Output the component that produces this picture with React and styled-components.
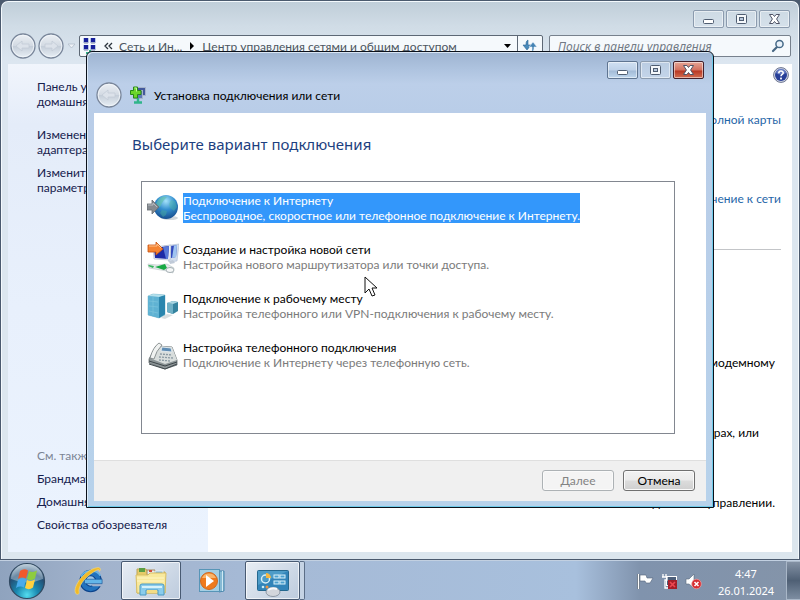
import React from 'react';
import styled, { createGlobalStyle } from 'styled-components';

const GlobalStyle = createGlobalStyle`
	* {
		box-sizing: border-box;
	}
	body {
		margin: 0;
		font-family: Lato, 'Noto Sans', sans-serif;
		font-size: 12px;
		line-height: 15px;
		color: #000;
		overflow: hidden;
	}
	button,
	input {
		font: inherit;
		color: inherit;
		padding: 0;
		margin: 0;
	}
	p, h1, h2, ul {
		margin: 0;
		padding: 0;
	}
	svg {
		display: block;
		flex-shrink: 0;
	}
`;

const Desktop = styled.div`
	position: relative;
	height: 100vh;
	display: flex;
	flex-direction: column;
	background: #4b5a6e;
`;

/* ---------- control panel window ---------- */

const MainWindow = styled.main`
	flex: 1;
	min-height: 0;
	display: flex;
	flex-direction: column;
	margin: 1px;
	padding: 0 6px 7px;
	border: 1px solid #f4f9fd;
	border-bottom: 0;
	border-radius: 7px 7px 0 0;
	background: linear-gradient(#c0ced9 0, #d0dce6 24px, #dce6f0 60px, #dce6ee 100%);
`;

const TitleButtons = styled.div`
	display: flex;
	justify-content: flex-end;
	gap: 2px;
	padding-top: ${(p) => p.$top}px;
	padding-right: 2px;
`;

const TitleButton = styled.button`
	width: 31px;
	height: 18px;
	display: flex;
	align-items: center;
	justify-content: center;
	border: 1px solid ${(p) => (p.$kind === 'close' ? '#43202b' : p.$kind === 'active' ? '#5f7591' : '#8b9bae')};
	border-radius: 2px;
	box-shadow: inset 0 0 0 1px rgba(255, 255, 255, 0.5);
	background: ${(p) =>
		p.$kind === 'close'
			? 'linear-gradient(#e5a596 0, #d3705e 8px, #b93824 9px, #d26e53 100%)'
			: p.$kind === 'active'
			? 'linear-gradient(#d0e0f2 0, #bfd2e9 8px, #a3bbd7 9px, #bfd7ee 100%)'
			: 'rgba(222, 232, 242, 0.35)'};
`;

const NavBar = styled.nav`
	display: flex;
	align-items: center;
	gap: 6px;
	height: 36px;
	padding: 0 1px 0 2px;
`;

const BackForward = styled.div`
	display: flex;
	align-items: center;
	gap: 2px;
	width: 63px;
`;

const AddressBar = styled.div`
	flex: 1;
	height: 22px;
	display: flex;
	align-items: center;
	border: 1px solid #5d6875;
	border-radius: 2px;
	background: #f5f9fc;
	color: #4c5661;
	overflow: hidden;
`;

const Crumbs = styled.div`
	flex: 1;
	display: flex;
	align-items: center;
	gap: 6px;
	padding: 0 6px 0 2px;
	white-space: nowrap;
`;

const Crumb = styled.button`
	border: 0;
	background: none;
`;

const Spacer = styled.span`
	flex: 1;
`;

const RefreshButton = styled.button`
	width: 25px;
	height: 20px;
	display: grid;
	place-items: center;
	border: 0;
	border-left: 1px solid #5d6875;
	background: none;
`;

const SearchBox = styled.label`
	width: 242px;
	height: 22px;
	display: flex;
	align-items: center;
	padding: 0 5px 0 8px;
	border: 1px solid #77818d;
	border-radius: 2px;
	background: #f5f9fc;
`;

const SearchInput = styled.input`
	flex: 1;
	min-width: 0;
	border: 0;
	outline: 0;
	background: none;
	font-family: 'Noto Sans', sans-serif;
	font-style: italic;
	&::placeholder {
		color: #727b86;
		opacity: 1;
	}
`;

const Client = styled.div`
	flex: 1;
	min-height: 0;
	display: flex;
	background: #fff;
`;

const Sidebar = styled.aside`
	width: 200px;
	flex-shrink: 0;
	display: flex;
	flex-direction: column;
	gap: 8px;
	padding: 15px 0 20px 29px;
	background: linear-gradient(#f1f5fc 0, #e4ecf9 60px, #e8f0fc 50%, #ebf3fe 100%);
	color: #15204d;
`;

const SideLink = styled.a`
	white-space: pre;
	color: inherit;
	text-decoration: none;
	margin-bottom: ${(p) => (p.$home ? 10 : 0)}px;
`;

const SeeAlso = styled.h2`
	margin-top: auto;
	font-size: 12px;
	font-weight: 400;
	color: #7b8494;
`;

const Content = styled.section`
	flex: 1;
	min-width: 0;
	display: flex;
	flex-direction: column;
	align-items: flex-end;
	padding: 3px 11px 0 0;
	white-space: nowrap;
`;

const HelpButton = styled.button`
	width: 16px;
	height: 16px;
	margin-right: -8px;
	border: 0;
	background: none;
`;

const ContentLink = styled.a`
	margin-top: ${(p) => p.$gap}px;
	color: #1f66a8;
	text-decoration: none;
`;

const Rule = styled.hr`
	width: 100%;
	margin: 43px 0 50px;
	border: 0;
	border-top: 1px solid #c3c5c8;
`;

const TaskText = styled.p`
	margin-top: 55px;
	padding-right: ${(p) => (p.$short ? 22 : 6)}px;
`;

/* ---------- wizard ---------- */

const Dialog = styled.section`
	position: absolute;
	z-index: 1;
	top: 51px;
	left: 86px;
	right: 86px;
	padding: 0 7px 6px;
	border: 1px solid #0b111b;
	border-radius: 6px 6px 0 0;
	box-shadow: inset 1px 1px 0 rgba(235, 245, 253, 0.75), inset -1px -1px 0 #6ecbea;
	background: linear-gradient(#9eb4d1 0, #afc4e0 18px, #bccfe9 32px, #b9cde8 60px, #b7d2eb 100%);
`;

const DialogTitle = styled.header`
	display: flex;
	align-items: center;
	gap: 8px;
	height: 34px;
	padding: 0 0 2px 2px;
`;

const RoundButton = styled.button`
	border: 0;
	background: none;
`;

const DialogName = styled.h1`
	font-size: 12px;
	font-weight: 400;
	line-height: 15px;
`;

const DialogBody = styled.div`
	background: #fff;
	padding: 20px 31px 26px 47px;
`;

const Heading = styled.h2`
	margin-left: -9px;
	margin-bottom: 26px;
	font-family: 'Noto Sans', sans-serif;
	font-size: 15px;
	line-height: 22px;
	font-weight: 400;
	color: #1d3f80;
`;

const Options = styled.ul`
	min-height: 253px;
	padding: 11px 0 0 5px;
	border: 1px solid #828790;
	list-style: none;
`;

const Option = styled.li`
	display: flex;
	gap: 4px;
	margin-bottom: 17px;
	height: 32px;
`;

const OptionButton = styled.button`
	align-self: flex-start;
	border: 0;
	text-align: left;
	white-space: nowrap;
	background: ${(p) => (p.$selected ? '#3397fb' : 'transparent')};
	color: ${(p) => (p.$selected ? '#fff' : '#000')};
`;

const Hint = styled.span`
	display: block;
	color: ${(p) => (p.$selected ? '#fff' : '#7b7b7b')};
`;

const DialogFooter = styled.footer`
	display: flex;
	justify-content: flex-end;
	gap: 9px;
	padding: 9px 11px 10px;
	border-top: 1px solid #dfdfdf;
	background: #f0f0f0;
`;

const PushButton = styled.button`
	width: 72px;
	height: 21px;
	border: 1px solid #707070;
	border-radius: 3px;
	box-shadow: inset 0 0 0 1px #fafafa;
	background: linear-gradient(#f2f2f2 0, #ebebeb 9px, #dcdcdc 10px, #cfcfcf 100%);
	&:disabled {
		border-color: #adb2b5;
		background: #f4f4f4;
		color: #838383;
	}
`;

/* ---------- taskbar ---------- */

const Taskbar = styled.footer`
	height: 40px;
	flex-shrink: 0;
	display: flex;
	align-items: center;
	border-top: 1px solid #c2d0e1;
	background: linear-gradient(90deg, #8fa3be 0, #a2b3cc 12%, #a5b9d5 30%, #a8c0dd 72%, #8093ad 80%, #8494a9 100%);
`;

const TaskButton = styled.button`
	width: ${(p) => p.$width}px;
	height: 39px;
	display: grid;
	place-items: center;
	border: ${(p) => (p.$open ? '1px solid #485a72' : '0')};
	border-radius: 2px;
	box-shadow: ${(p) => (p.$open ? 'inset 0 0 0 1px rgba(255, 255, 255, 0.65)' : 'none')};
	background: ${(p) => (p.$open ? 'linear-gradient(135deg, #e7edf4, #bdcbdd)' : 'none')};
`;

const StackEdge = styled.span`
	width: 5px;
	height: 39px;
	border: 1px solid #5c6e87;
	border-left: 0;
	border-radius: 0 2px 2px 0;
	background: #c5d3e4;
`;

const Gap = styled.span`
	width: 3px;
`;

const Tray = styled.div`
	display: flex;
	align-items: center;
	gap: 7px;
	margin-left: auto;
	padding-top: 2px;
`;

const Clock = styled.time`
	width: 74px;
	margin-right: 3px;
	text-align: center;
	font-family: 'Noto Sans', sans-serif;
	font-size: 11px;
	line-height: 17px;
	color: #fff;
`;

const ShowDesktop = styled.button`
	width: 14px;
	height: 39px;
	border: 1px solid #a9b7c8;
	border-right: 0;
	background: linear-gradient(#8391a4, #4f6075 50%, #7d8da1);
`;

const Cursor = styled.svg`
	position: absolute;
	z-index: 2;
	left: 364px;
	top: 276px;
`;

/* ---------- drawings ---------- */

const MinGlyph = () => (
	<svg width="13" height="12" viewBox="0 0 13 12">
		<rect x="1.5" y="6.5" width="10" height="4" rx="1" fill="#fff" stroke="#4f5d71" />
	</svg>
);

const MaxGlyph = () => (
	<svg width="13" height="12" viewBox="0 0 13 12">
		<rect x="1.5" y="1.5" width="10" height="9" rx="1" fill="#f5f8fb" stroke="#4f5d71" />
		<rect x="4.5" y="4.5" width="4" height="3" fill="#b8c8dc" stroke="#4f5d71" />
	</svg>
);

const CloseGlyph = () => (
	<svg width="13" height="12" viewBox="0 0 13 12">
		<path
			d="M1.5 1.5h3.4l1.6 2 1.6-2h3.4L8.6 6l2.9 4.5H8.1l-1.6-2-1.6 2H1.5L4.4 6z"
			fill="#fff"
			stroke="#4f5366"
		/>
	</svg>
);

const WindowButtons = ({ active, top }) => (
	<TitleButtons $top={top}>
		<TitleButton $kind={active ? 'active' : 'plain'} aria-label="Свернуть"><MinGlyph /></TitleButton>
		<TitleButton aria-label="Развернуть"><MaxGlyph /></TitleButton>
		<TitleButton $kind={active ? 'close' : 'plain'} aria-label="Закрыть"><CloseGlyph /></TitleButton>
	</TitleButtons>
);

const RoundArrow = ({ id, flip }) => (
	<svg width="26" height="26" viewBox="0 0 26 26">
		<defs>
			<linearGradient id={id} x1="0" y1="0" x2="0" y2="1">
				<stop offset="0" stopColor="#edf1f5" />
				<stop offset=".48" stopColor="#d3dae3" />
				<stop offset=".52" stopColor="#c5ced9" />
				<stop offset="1" stopColor="#e9f0f6" />
			</linearGradient>
		</defs>
		<circle cx="13" cy="13" r="12" fill={`url(#${id})`} stroke="#79869a" strokeWidth="1.3" />
		<circle cx="13" cy="13" r="10.8" fill="none" stroke="#f4f8fb" strokeOpacity=".8" />
		<path
			d="M6 13l6-5v3h7v4h-7v3z"
			transform={flip ? 'translate(26 0) scale(-1 1)' : undefined}
			fill="#dce2ea"
			stroke="#c3ccd7"
			strokeWidth=".8"
		/>
	</svg>
);

const NetworkCenterIcon = () => (
	<svg width="16" height="20" viewBox="0 0 16 20">
		<path d="M8 14v5M4 17h8" stroke="#36b18a" strokeWidth="2" />
		{[[2, 3], [9, 3], [2, 10], [9, 10]].map(([x, y]) => (
			<g key={`${x}-${y}`}>
				<rect x={x - 1} y={y - 1} width="6" height="5" fill="#b9c8e8" />
				<rect x={x} y={y - 1} width="4" height="4" fill="#17209b" />
				<path d={`M${x} ${y + 4}h4`} stroke="#7884a5" />
			</g>
		))}
	</svg>
);

const RefreshIcon = () => (
	<svg width="16" height="14" viewBox="0 0 16 14">
		<path d="M6 1C4 2 4 4 4 6H1l4 5 4-5H6c0-2 0-3 0-5z" fill="#4a8bbb" stroke="#2c6796" strokeWidth=".6" />
		<path d="M10 13c2-1 2-3 2-5h3l-4-5-4 5h3c0 2 0 3 0 5z" fill="#4583b4" stroke="#e8f2f8" strokeWidth=".6" />
	</svg>
);

const SearchIcon = () => (
	<svg width="14" height="14" viewBox="0 0 14 14">
		<path d="M6 8l-4 4" stroke="#476783" strokeWidth="2.2" strokeLinecap="round" />
		<circle cx="8.5" cy="5" r="3.6" fill="#e9f2fa" stroke="#456987" strokeWidth="1.5" />
	</svg>
);

const HelpIcon = () => (
	<svg width="16" height="16" viewBox="0 0 16 16">
		<circle cx="8" cy="8" r="7.4" fill="#d3d8e6" stroke="#6b7490" />
		<circle cx="8" cy="8" r="6" fill="#273f98" />
		<path d="M3 6a5 4.3 0 0 1 10 0q-5 3-10 0z" fill="#7d93d3" opacity=".7" />
		<path d="M5.8 6.2c0-3 4.6-2.8 4.4-.2C10.1 7.5 8 7.5 8 9.3" fill="none" stroke="#fff" strokeWidth="1.6" />
		<rect x="7.1" y="10.6" width="1.8" height="1.8" fill="#fff" />
	</svg>
);

const WizardIcon = () => (
	<svg width="16" height="18" viewBox="0 0 16 18">
		<rect x="6.5" y="1.5" width="9" height="8" fill="#43599c" stroke="#a7b5ca" />
		<rect x="3.5" y="4.5" width="9" height="8" fill="#5e79b5" stroke="#a7b5ca" />
		<path d="M8 12v4M4 16.5h8" stroke="#2fb58a" strokeWidth="2.4" />
		<path d="M3.5 1h4v3.5H11v4H7.5V12h-4V8.5H.5v-4h3z" fill="#6bd52a" stroke="#278716" />
		<path d="M4.5 2h2v3.5" fill="none" stroke="#c8f79f" />
	</svg>
);

const GlobeIcon = () => (
	<svg width="32" height="32" viewBox="0 0 32 32">
		<defs>
			<radialGradient id="globe" cx=".5" cy=".25" r=".8">
				<stop offset="0" stopColor="#a5e3fa" />
				<stop offset=".45" stopColor="#3590cf" />
				<stop offset="1" stopColor="#124587" />
			</radialGradient>
		</defs>
		<ellipse cx="23" cy="25" rx="8" ry="2" fill="#bcc5cc" opacity=".7" />
		<circle cx="19" cy="14" r="12" fill="url(#globe)" />
		<path d="M12 6c3-3 6-3 8-2l-3 3-2 3-2 4-4-1c0-3 1-5 3-7z" fill="#63c2a5" opacity=".6" />
		<path d="M24 7l4 1 2 6-3 4-4-3-1-4z" fill="#53b9a0" opacity=".4" />
		<path d="M15 17l5 1-1 4-3 2-3-4z" fill="#46a8a0" opacity=".5" />
		<path d="M0 11h5V7l7 7-7 7v-4H0z" fill="#858a90" stroke="#686e75" strokeWidth=".8" />
		<path d="M1 12h5v-2l4 4" fill="none" stroke="#b9bdc2" />
	</svg>
);

const NewNetworkIcon = () => (
	<svg width="32" height="32" viewBox="0 0 32 32">
		<path d="M17 4l15-2-2 17-8 1z" fill="#d3deed" stroke="#a9b8cf" strokeWidth=".6" />
		<path d="M24 4l6-1-1 12-5 1z" fill="#3148bd" />
		<path d="M27 3.5l3-.5-1 12-4 1z" fill="#9fc4f0" />
		<path d="M6 5l18-2-1 15L7 17z" fill="#eef2f8" stroke="#a6b0c7" strokeWidth=".6" />
		<path d="M7 6l15-2-1 13L8 16z" fill="#1c2aa6" />
		<path d="M16 5l6-1-1 13h-2z" fill="#5879d8" />
		<path d="M22 19l4-1 2 3-5 1z" fill="#c0cad8" />
		<path d="M1 22l9 1 10-1 7 4-1 5-6-2-18-3z" fill="#e3e9ea" stroke="#b9c5c6" strokeWidth=".6" />
		<path d="M2 23l5 1-1 2-5-2z" fill="#36b45c" />
		<path d="M8 25l10-3 2 4-3 2z" fill="#17a944" />
		<ellipse cx="23" cy="28" rx="4" ry="2.5" fill="#f6f8f8" stroke="#a5afb4" />
		<path d="M1 3h8V0l7 7-7 6v-3H1z" fill="#f58433" stroke="#c65210" strokeWidth=".8" />
		<path d="M2 4h8V2l4 4" fill="none" stroke="#ffc18c" />
	</svg>
);

const WorkplaceIcon = () => (
	<svg width="32" height="32" viewBox="0 0 32 32">
		<path d="M1 5l5-2 12 1v20l-6 3-11-3z" fill="#3b9ac0" stroke="#8dbccb" strokeWidth=".6" />
		<path d="M1 5l11 1v21L1 24z" fill="#5fb2d3" />
		<path d="M12 6l6-2v19l-6 4z" fill="#2b86ae" />
		<path d="M1 5l5-2 12 1-6 2z" fill="#b3e0ec" />
		<path d="M2 10l9 1M2 15l9 1M2 20l9 2M6 6v18" stroke="#7cc4dc" strokeWidth=".7" />
		<path d="M20 12l6-2 5 1v9l-5 3-6-2z" fill="#35839f" />
		<path d="M20 12l6 1v10l-6-2z" fill="#6fb0c6" />
		<path d="M20 12l6-2 5 1-5 2z" fill="#a9d5e1" />
		<path d="M14 27l6-4 6 1-8 4z" fill="#bec8cc" opacity=".6" />
	</svg>
);

const PhoneIcon = () => (
	<svg width="32" height="32" viewBox="0 0 32 32">
		<path d="M2 19L9 6l16 1 5 13v5l-12 4-16-6z" fill="#8e9698" stroke="#646d70" strokeWidth=".8" />
		<path d="M9 6l16 1 5 13-12 4-13-5z" fill="#d8dddc" />
		<path d="M15 7l9 1 1 4-11-1z" fill="#5f8db5" stroke="#edf3f4" strokeWidth=".8" />
		<path d="M3 18Q6 7 12 3l3 2Q9 11 7 19z" fill="#f0f2f1" stroke="#777f80" strokeWidth=".8" />
		<path d="M13 14l12 1M12 17l14 1M12 20l11 1" stroke="#8b9aa3" strokeWidth="1.3" strokeDasharray="2 1" />
		<path d="M2 21l16 5 12-4M2 24l16 5 12-5" fill="none" stroke="#3e474b" />
	</svg>
);

const StartOrb = () => (
	<svg width="38" height="38" viewBox="0 0 38 38">
		<defs>
			<radialGradient id="orb" cx=".5" cy=".9" r=".9">
				<stop offset="0" stopColor="#54dcef" />
				<stop offset=".35" stopColor="#1988b0" />
				<stop offset=".7" stopColor="#244d73" />
				<stop offset="1" stopColor="#b6c8d6" />
			</radialGradient>
		</defs>
		<circle cx="19" cy="19" r="17.5" fill="url(#orb)" stroke="#304961" strokeWidth="1.2" />
		<path d="M3 17a16 15 0 0 1 32 0q-16 7-32 0z" fill="#dce9ef" opacity=".4" />
		<path d="M12 9q4-3 8-.5l-2 8q-4-2-8 .5z" fill="#f1592b" />
		<path d="M21 9q4 2 8-.5l-2 8q-4 3-8 .5z" fill="#8dcc3f" />
		<path d="M10 18q4-3 8-.5l-2 8q-4-2-8 .5z" fill="#49abec" />
		<path d="M19 18q4 2 8-.5l-2 8q-4 3-8 .5z" fill="#ffd140" />
	</svg>
);

const ExplorerEIcon = () => (
	<svg width="30" height="30" viewBox="0 0 34 34">
		<circle cx="20" cy="17" r="9" fill="#9fc6e4" stroke="#0d438b" strokeWidth="7.5" />
		<circle cx="20" cy="17" r="9" fill="none" stroke="#2373bd" strokeWidth="5" />
		<path d="M9 12a12 10 0 0 1 22-1" fill="none" stroke="#67b4e6" strokeWidth="2" />
		<path d="M20 19h13v4H22z" fill="#a0b1cb" />
		<path d="M13 15h20v5H13z" fill="#63b5e8" stroke="#155294" strokeWidth=".7" />
		<path d="M3 31C-1 23 14 4 27 2c4-1 5 2 3 4 0-3-3-2-7 1C13 13 5 24 7 30c0 2-2 3-4 1z" fill="#f1ba27" stroke="#f3dc80" strokeWidth=".7" />
	</svg>
);

const FolderIcon = () => (
	<svg width="34" height="32" viewBox="0 0 34 32">
		<path d="M3 4h9l2 3h17v21H3z" fill="#e6cb68" stroke="#bea75b" />
		<path d="M5 3h6v4H5z" fill="#5c9e45" />
		<path d="M13 5h8v5h-8z" fill="#e7edf2" stroke="#a6895a" />
		<path d="M21 6h8v5h-8z" fill="#84b8d7" stroke="#e7edf2" />
		<path d="M15 5h3v2h-3z" fill="#d34c3b" />
		<path d="M2 10h12l2-2h16l-1 20H3z" fill="#f8e99d" stroke="#d9bf65" />
		<path d="M3 13h27M3 16h27" stroke="#fff6c5" />
		<path d="M6 30V21q0-2 2-2h20q2 0 2 2v9h-6v-5H12v5z" fill="#8accec" stroke="#4a99c3" />
		<path d="M8 22h20" stroke="#d6f2fb" strokeWidth="2" />
		<path d="M13 25h10v3H13z" fill="#f3dc86" />
	</svg>
);

const PlayerIcon = () => (
	<svg width="28" height="28" viewBox="0 0 28 28">
		<path d="M7 4h19v20l-5 1z" fill="#85b9d4" stroke="#4b88ad" />
		<rect x="1.5" y="2.5" width="20" height="22" fill="#a4cfe4" stroke="#5795b7" />
		<path d="M24.5 4v20" stroke="#d0e9f4" />
		<circle cx="11" cy="14" r="8.5" fill="#ee7a1e" stroke="#d2681c" />
		<path d="M4 11a7.5 7 0 0 1 14 0z" fill="#f9b56b" />
		<path d="M8 8l8 6-8 6z" fill="#fff" />
	</svg>
);

const ControlPanelIcon = () => (
	<svg width="34" height="32" viewBox="0 0 34 32">
		<rect x="1.5" y="5.5" width="31" height="20" rx="1" fill="#3284b9" stroke="#24688f" />
		<path d="M2 6h30L2 20z" fill="#68b3d7" opacity=".5" />
		<circle cx="9.5" cy="14" r="4" fill="none" stroke="#d6eff8" strokeWidth="1.5" />
		<path d="M10 13V8a5 5 0 0 1 5 5z" fill="#f4b744" />
		{[[18, 10], [24, 10], [18, 16], [24, 16]].map(([x, y]) => (
			<rect key={`${x}-${y}`} x={x} y={y} width="5" height="3" fill="#4b9fce" stroke="#d9f1fa" />
		))}
		<circle cx="7" cy="22" r="1.3" fill="#c9edf8" />
		<circle cx="11" cy="22" r="1.5" fill="#ef943f" />
		<ellipse cx="17" cy="27" rx="7" ry="4.5" fill="#d3d6dc" stroke="#8e98a5" />
		<path d="M12 25q4-3 9-1" stroke="#f8fafc" strokeWidth="2" fill="none" />
	</svg>
);

const FlagIcon = () => (
	<svg width="17" height="17" viewBox="0 0 17 17">
		<path d="M1.5 1v15" stroke="#3d4c5f" strokeWidth="3" />
		<path d="M1.5 1v15" stroke="#fff" strokeWidth="1.6" />
		<path d="M3 2h6l1 3h6l-3 5H9L8 8H3z" fill="#fff" stroke="#52637a" strokeWidth=".6" />
	</svg>
);

const TrayNetworkIcon = () => (
	<svg width="17" height="17" viewBox="0 0 17 17">
		<rect x="5.5" y="3.5" width="10" height="9" fill="#4c5e79" stroke="#fff" />
		<path d="M2 1v3M5 1v3M1 4h5v3H4v8h8" fill="none" stroke="#fff" strokeWidth="1.3" />
		<rect x="7" y="7" width="9" height="9" fill="#a51e29" />
		<path d="M9 9l5 5M14 9l-5 5" stroke="#ed4852" strokeWidth="1.7" />
	</svg>
);

const VolumeIcon = () => (
	<svg width="17" height="17" viewBox="0 0 17 17">
		<path d="M1 6h3l5-5v14l-5-4H1z" fill="#fff" stroke="#59687c" strokeWidth=".6" />
		<circle cx="11.5" cy="11" r="4.8" fill="#d72d32" stroke="#f0a4a4" strokeWidth=".7" />
		<path d="M9.5 9l4 4M13.5 9l-4 4" stroke="#fff" strokeWidth="1.5" />
	</svg>
);

const options = [
	{
		title: 'Подключение к Интернету',
		hint: 'Беспроводное, скоростное или телефонное подключение к Интернету.',
		icon: <GlobeIcon />,
		selected: true,
	},
	{
		title: 'Создание и настройка новой сети',
		hint: 'Настройка нового маршрутизатора или точки доступа.',
		icon: <NewNetworkIcon />,
	},
	{
		title: 'Подключение к рабочему месту',
		hint: 'Настройка телефонного или VPN-подключения к рабочему месту.',
		icon: <WorkplaceIcon />,
	},
	{
		title: 'Настройка телефонного подключения',
		hint: 'Подключение к Интернету через телефонную сеть.',
		icon: <PhoneIcon />,
	},
];

const ControlPanel = () => (
	<MainWindow>
		<WindowButtons top={8} />
		<NavBar>
			<BackForward>
				<RoundButton aria-label="Назад"><RoundArrow id="back" /></RoundButton>
				<RoundButton aria-label="Вперёд"><RoundArrow id="forward" flip /></RoundButton>
				<svg width="10" height="8" viewBox="0 0 10 8">
					<path d="M2 2h7L5.5 6z" fill="#eef3f8" stroke="#b1bdca" strokeWidth=".8" />
				</svg>
			</BackForward>
			<AddressBar>
				<Crumbs>
					<NetworkCenterIcon />
					<svg width="9" height="8" viewBox="0 0 9 8">
						<path d="M4 1L1 4l3 3M8 1L5 4l3 3" fill="none" stroke="#2b333c" strokeWidth="1.3" />
					</svg>
					<Crumb>Сеть и Ин...</Crumb>
					<svg width="8" height="8" viewBox="0 0 8 8"><path d="M2 0l4 4-4 4z" /></svg>
					<Crumb>Центр управления сетями и общим доступом</Crumb>
					<Spacer />
					<svg width="7" height="4" viewBox="0 0 7 4"><path d="M0 0h7L3.5 4z" /></svg>
				</Crumbs>
				<RefreshButton aria-label="Обновить"><RefreshIcon /></RefreshButton>
			</AddressBar>
			<SearchBox>
				<SearchInput type="text" aria-label="Поиск" placeholder="Поиск в панели управления" />
				<SearchIcon />
			</SearchBox>
		</NavBar>
		<Client>
			<Sidebar>
				<SideLink href="#home" $home>{'Панель управления\nдомашняя'}</SideLink>
				<SideLink href="#adapter">{'Изменение\nадаптера'}</SideLink>
				<SideLink href="#sharing">{'Изменить\nпараметры'}</SideLink>
				<SeeAlso>См. также</SeeAlso>
				<SideLink href="#firewall">Брандмауэр Windows</SideLink>
				<SideLink href="#homegroup">Домашняя</SideLink>
				<SideLink href="#internet">Свойства обозревателя</SideLink>
			</Sidebar>
			<Content>
				<HelpButton aria-label="Справка"><HelpIcon /></HelpButton>
				<ContentLink href="#map" $gap={29}>Просмотр полной карты</ContentLink>
				<ContentLink href="#connect" $gap={64}>Подключение к сети</ContentLink>
				<Rule />
				<TaskText>проводному, модемному</TaskText>
				<TaskText $short>на других компьютерах, или</TaskText>
				<TaskText>сведений об управлении.</TaskText>
			</Content>
		</Client>
	</MainWindow>
);

const ConnectionWizard = () => (
	<Dialog role="dialog" aria-labelledby="wizard-name">
		<WindowButtons top={9} active />
		<DialogTitle>
			<RoundButton aria-label="Назад"><RoundArrow id="wizard-back" /></RoundButton>
			<WizardIcon />
			<DialogName id="wizard-name">Установка подключения или сети</DialogName>
		</DialogTitle>
		<DialogBody>
			<Heading>Выберите вариант подключения</Heading>
			<Options>
				{options.map((o) => (
					<Option key={o.title}>
						{o.icon}
						<OptionButton $selected={o.selected}>
							{o.title}
							<Hint $selected={o.selected}>{o.hint}</Hint>
						</OptionButton>
					</Option>
				))}
			</Options>
		</DialogBody>
		<DialogFooter>
			<PushButton disabled>Далее</PushButton>
			<PushButton>Отмена</PushButton>
		</DialogFooter>
	</Dialog>
);

const App = () => {
	return (
		<>
			<GlobalStyle />
			<Desktop>
				<ControlPanel />
				<ConnectionWizard />
				<Taskbar>
					<TaskButton $width={54} aria-label="Пуск"><StartOrb /></TaskButton>
					<Gap />
					<TaskButton $width={61} aria-label="Internet Explorer"><ExplorerEIcon /></TaskButton>
					<Gap />
					<TaskButton $width={60} $open aria-label="Проводник"><FolderIcon /></TaskButton>
					<TaskButton $width={61} aria-label="Проигрыватель"><PlayerIcon /></TaskButton>
					<Gap />
					<TaskButton $width={55} $open aria-label="Панель управления"><ControlPanelIcon /></TaskButton>
					<StackEdge />
					<Tray>
						<FlagIcon />
						<TrayNetworkIcon />
						<VolumeIcon />
						<Clock>
							4:47
							<br />
							26.01.2024
						</Clock>
					</Tray>
					<ShowDesktop aria-label="Свернуть все окна" />
				</Taskbar>
				<Cursor width="14" height="22" viewBox="0 0 14 22">
					<path d="M1 1v16l4-4 3 7 3-1-3-7h5z" fill="#fff" stroke="#111" />
				</Cursor>
			</Desktop>
		</>
	);
};

export default App;
